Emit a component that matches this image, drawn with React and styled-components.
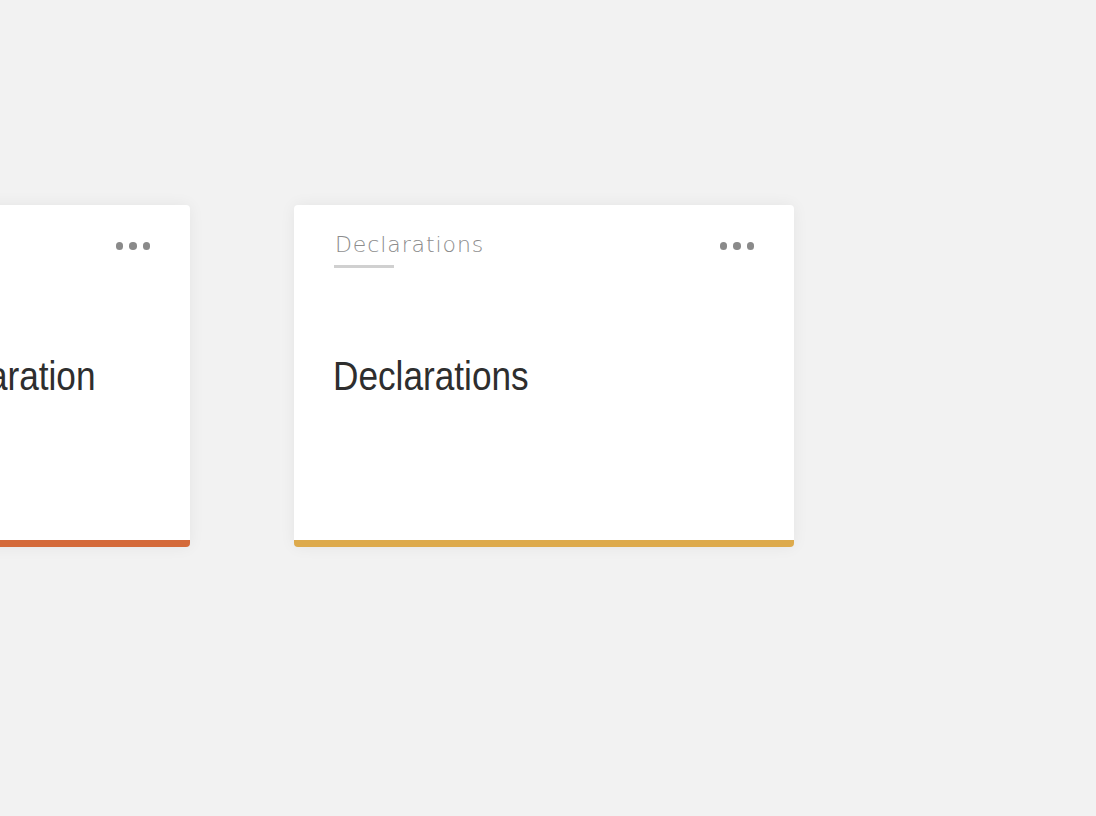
import React from "react";
import styled, { createGlobalStyle } from "styled-components";

const GlobalStyle = createGlobalStyle`
  html, body {
    margin: 0;
    padding: 0;
    background: #f2f2f2;
    overflow: hidden;
  }
`;

const Page = styled.div`
  width: 1096px;
  height: 816px;
  overflow: hidden;
  background: #f2f2f2;
`;

const Row = styled.div`
  display: flex;
  gap: 104px;
  padding-top: 205px;
  margin-left: -310px;
`;

const Card = styled.div`
  flex: none;
  width: 500px;
  height: 342px;
  box-sizing: border-box;
  background: #fff;
  border-radius: 4px;
  box-shadow: 0 0 16px rgba(0, 0, 0, 0.06);
  border-bottom: 7px solid ${(p) => p.$accent};
  display: flex;
  flex-direction: column;
  padding: 28px 40px 0 40px;
`;

const Header = styled.div`
  display: flex;
  justify-content: space-between;
  align-items: flex-start;
`;

const Label = styled.div`
  font-family: "DejaVu Sans", sans-serif;
  font-weight: 200;
  font-size: 22px;
  letter-spacing: 0.9px;
  color: #8c8c8c;
  line-height: 24px;
  padding-left: 1px;

  &::after {
    content: "";
    display: block;
    width: 60px;
    height: 3px;
    margin-top: 8px;
    margin-left: -1px;
    background: #d0d0d0;
  }
`;

const Dots = styled.div`
  display: flex;
  gap: 6px;
  margin-top: 9px;

  span {
    width: 7.5px;
    height: 7.5px;
    border-radius: 50%;
    background: #8a8a8a;
  }
`;

/* condensed look of the heading */
const Title = styled.div`
  font-family: "Liberation Sans", Arial, sans-serif;
  font-size: 40px;
  color: #2e2e2e;
  margin-top: 84px;
  margin-left: -1px;
  line-height: 48px;
  white-space: nowrap;
  transform: scaleX(0.88);
  transform-origin: left center;
`;

const cards = [
  { label: "Declarations", title: "Warehouse Declaration", accent: "#d46a3a" },
  { label: "Declarations", title: "Declarations", accent: "#ddaa4c" },
];

export default function App() {
  return (
    <Page>
      <GlobalStyle />
      <Row>
        {cards.map((c, i) => (
          <Card key={i} $accent={c.accent}>
            <Header>
              <Label>{c.label}</Label>
              <Dots>
                <span />
                <span />
                <span />
              </Dots>
            </Header>
            <Title>{c.title}</Title>
          </Card>
        ))}
      </Row>
    </Page>
  );
}
